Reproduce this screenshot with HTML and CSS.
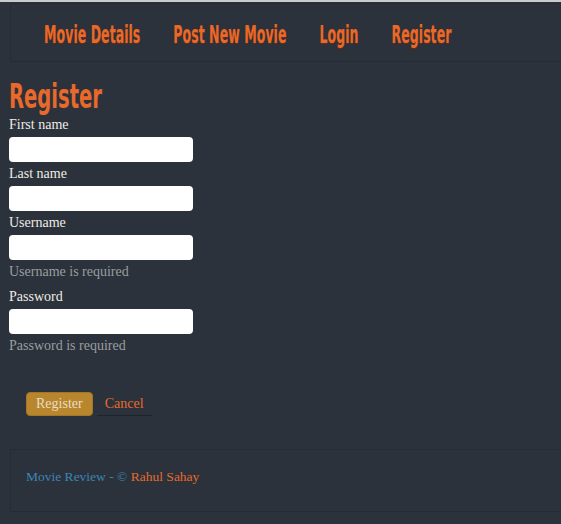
FILE: index.html
```html
<!DOCTYPE html>
<html lang="en">
<head>
    <title>Register - Movie Review</title>
    <link rel="stylesheet" href="styles.css">
</head>
<body>
    <div class="topnav">
        <div class="nav-links">
            <a href="#">Movie Details</a>
            <a href="#">Post New Movie</a>
            <a href="#">Login</a>
            <a href="#">Register</a>
        </div>
    </div>

    <div id="content">
        <h2>Register</h2>
        <form>
            <div class="field">
                <label for="firstName">First name</label>
                <input type="text" id="firstName" name="firstName">
            </div>
            <div class="field">
                <label for="lastName">Last name</label>
                <input type="text" id="lastName" name="lastName">
            </div>
            <div class="field">
                <label for="username">Username</label>
                <input type="text" id="username" name="username">
                <span class="help">Username is required</span>
            </div>
            <div class="field">
                <label for="password">Password</label>
                <input type="password" id="password" name="password">
                <span class="help">Password is required</span>
            </div>

            <div class="actions">
                <button type="button" class="btn-primary">Register</button>
                <a href="#" class="btn-link">Cancel</a>
            </div>
        </form>
    </div>

    <div class="footer">
        <p><span class="brand">Movie Review - &copy;</span> <span class="author">Rahul Sahay</span></p>
    </div>
</body>
</html>
```

FILE: styles.css
```css
body {
    font-family: "Liberation Serif", "DejaVu Serif", serif;
    background-color: #2b323c;
    color: #f0ece4;
    margin: 0;
    padding: 0;
    border-top: 2px solid #c9cbcd;
}

.topnav {
    margin: 1px 0 0 10px;
    height: 59px;
    border: 1px solid #262c35;
    border-right: none;
    display: flex;
    align-items: center;
    padding: 3px 0 0 33px;
    box-sizing: border-box;
    white-space: nowrap;
}

/* condensed headline look: narrow the bold face horizontally */
.nav-links {
    display: flex;
    gap: 59px;
    transform: scaleX(0.56);
    transform-origin: left center;
}

.nav-links a {
    font-family: "DejaVu Sans", sans-serif;
    font-stretch: condensed;
    font-weight: bold;
    font-size: 25px;
    color: #e8692a;
    text-decoration: none;
    text-shadow: 0 1px 1px #6a2e14;
}

#content {
    padding: 0 9px;
}

h2 {
    font-family: "DejaVu Sans", sans-serif;
    font-stretch: condensed;
    font-weight: bold;
    font-size: 34px;
    color: #e8692a;
    margin: 16px 0 3px;
    line-height: 36px;
    transform: scaleX(0.64);
    transform-origin: left center;
}

.field {
    display: flex;
    flex-direction: column;
    align-items: flex-start;
}

label {
    font-size: 14px;
    line-height: 16px;
    margin: 0 0 4px;
}

input {
    width: 184px;
    height: 25px;
    border: none;
    border-radius: 4px;
    background-color: #fff;
    margin-bottom: 4px;
    box-sizing: border-box;
}

.help {
    font-size: 14px;
    color: #9a9e9e;
    margin: 0 0 9px;
    line-height: 16px;
}

.actions {
    margin-top: 29px;
    padding-left: 17px;
    display: flex;
    align-items: center;
    gap: 4px;
}

.btn-primary {
    font-family: inherit;
    font-size: 14px;
    background-color: #b8862c;
    color: #ecdcc0;
    border: 1px solid #a27626;
    border-radius: 4px;
    padding: 3px 9px;
    height: 24px;
    cursor: pointer;
}

.btn-link {
    font-size: 14px;
    color: #e8692a;
    text-decoration: none;
    padding: 3px 8px;
    border-bottom: 1px solid #1e242c;
}

.footer {
    margin: 33px 0 0 10px;
    height: 61px;
    border: 1px solid #262c35;
    border-right: none;
    display: flex;
    align-items: center;
    padding-left: 15px;
}

.footer p {
    margin: 0 0 8px;
    font-size: 13.5px;
}

.brand {
    color: #3a86b4;
}

.author {
    color: #e8692a;
}
```
